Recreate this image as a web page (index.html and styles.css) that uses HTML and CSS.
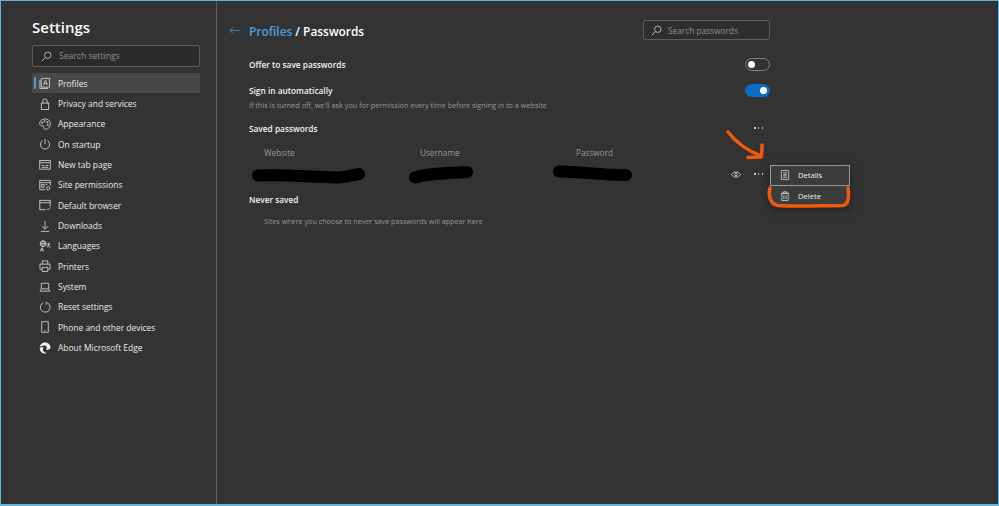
FILE: index.html
```html
<!DOCTYPE html>
<html lang="en">
<head>
<meta charset="utf-8">
<title>Settings</title>
<link rel="stylesheet" href="styles.css">
</head>
<body>
<div class="app">
  <aside class="sidebar">
    <h1 class="app-title">Settings</h1>
    <div class="search side-search">
      <svg class="search-icon" viewBox="0 0 13 13"><circle cx="8" cy="5" r="3.8"/><path d="M5.2 7.8 1 12"/></svg>
      <span>Search settings</span>
    </div>
    <nav class="nav">
      <a class="nav-item active"><svg class="ico" viewBox="0 0 13 13"><path d="M2.5 1.5h9v9.5h-9z"/><path d="M1 3v9.5h9"/><path d="M5 8.5 7 3.5l2 5M5.7 7h2.6"/></svg>Profiles</a>
      <a class="nav-item"><svg class="ico" viewBox="0 0 13 13"><rect x="2.5" y="5.5" width="8" height="7"/><path d="M4.2 5.5V3.2a2.3 2.3 0 0 1 4.6 0v2.3"/></svg>Privacy and services</a>
      <a class="nav-item"><svg class="ico" viewBox="0 0 13 13"><path d="M6.5 1C3 1 .8 3.3.8 6c0 2 1.500 2.600 3 2.500 1.500 0 1.700.8 1.500 1.700-.2 1.300.4 2 1.700 2 3 0 5.300-2.500 5.300-5.700C12.300 3.200 10 1 6.500 1z"/><circle cx="3.500" cy="5.200" r=".7"/><circle cx="6" cy="3.500" r=".7"/><circle cx="9" cy="4.500" r=".7"/><circle cx="9.500" cy="7.500" r=".7"/></svg>Appearance</a>
      <a class="nav-item"><svg class="ico" viewBox="0 0 13 13"><path d="M6.500 1v5.500"/><path d="M3.800 2.800a5 5 0 1 0 5.400 0"/></svg>On startup</a>
      <a class="nav-item"><svg class="ico" viewBox="0 0 13 13"><rect x=".8" y="1.500" width="11.400" height="9.500"/><path d="M.8 4h11.400M3 7h2.500M7 7h3M3 9h7"/></svg>New tab page</a>
      <a class="nav-item"><svg class="ico" viewBox="0 0 13 13"><path d="M7 11.500H.8v-10h11.400V7M.8 4h11.400"/><path d="M2.500 6h3v3h-3zM7 6h2"/><circle cx="10" cy="10" r="1.800"/></svg>Site permissions</a>
      <a class="nav-item"><svg class="ico" viewBox="0 0 13 13"><path d="M7 11.500H.8v-10h11.400V8M.8 4h11.400"/><path d="m8.500 10.500 1.200 1.200 2.500-2.500"/></svg>Default browser</a>
      <a class="nav-item"><svg class="ico" viewBox="0 0 13 13"><path d="M6.500 1v8.500M3 6.500l3.500 3.500L10 6.500M2 12.300h9"/></svg>Downloads</a>
      <a class="nav-item"><svg class="ico" viewBox="0 0 13 13"><circle cx="4.500" cy="4" r="3.200"/><path d="M1.300 4h6.400M4.500.8c-2 2-2 4.400 0 6.400M4.500.8c2 2 2 4.400 0 6.400M8.500 4.500h4M10.500 3v1.500c0 1.500-.8 3-2 3.500M9.500 5.500c.5 1.200 1.500 2 3 2.500M1.500 12.300l1.700-4 1.700 4M2 11h2.400"/></svg>Languages</a>
      <a class="nav-item"><svg class="ico" viewBox="0 0 13 13"><path d="M3.500 4.500v-3.500h6v3.500M3 10H1V4.500h11V10h-2"/><path d="M3.500 8h6v4.500h-6z"/></svg>Printers</a>
      <a class="nav-item"><svg class="ico" viewBox="0 0 13 13"><path d="M2.500 8.500v-6h8v6M1 11l1.500-2.500h8L12 11z"/></svg>System</a>
      <a class="nav-item"><svg class="ico" viewBox="0 0 13 13"><path d="M4.500 2a5.300 5.300 0 1 0 4.500 0M7 1 8.700 2.300 7.500 4"/></svg>Reset settings</a>
      <a class="nav-item"><svg class="ico" viewBox="0 0 13 13"><rect x="3" y=".8" width="7" height="11.400"/><path d="M5.800 10.500h1.400"/></svg>Phone and other devices</a>
      <a class="nav-item"><svg class="ico edge" viewBox="0 0 13 13"><path class="edge-a" d="M.8 6C1 2.800 3.500.6 6.600.6c3.300 0 5.900 2.400 5.900 5.200 0 1.800-1.400 2.700-2.800 2.700-1 0-2-.4-2-1 1.300-.8 1-3.700-1.900-3.700C3.200 3.800 1.600 4.600.8 6z"/><path class="edge-a" d="M.7 7c.3 3 2.500 5.400 5.300 5.400 1 0 1.800-.2 2.500-.6-2.200.3-4.300-1.500-4.300-3.600 0-1 .4-1.900 1-2.500C3.400 5.400 1.400 5.600.7 7z"/></svg>About Microsoft Edge</a>
    </nav>
  </aside>

  <main class="main">
    <header class="page-head">
      <svg class="back" viewBox="0 0 11 9"><path d="M10.500 4.500H1M4.500 1 1 4.500 4.500 8"/></svg>
      <h2 class="crumbs"><span class="crumb-link">Profiles</span> / Passwords</h2>
      <div class="search main-search">
        <svg class="search-icon" viewBox="0 0 13 13"><circle cx="8" cy="5" r="3.800"/><path d="M5.200 7.800 1 12"/></svg>
        <span>Search passwords</span>
      </div>
    </header>

    <section class="content">
      <div class="row row-offer">
        <span class="label">Offer to save passwords</span>
        <span class="toggle"><i class="knob"></i></span>
      </div>
      <div class="row row-sign">
        <span class="label">Sign in automatically</span>
        <span class="toggle on"><i class="knob"></i></span>
      </div>
      <p class="hint">If this is turned off, we'll ask you for permission every time before signing in to a website</p>
      <div class="row row-saved">
        <span class="label">Saved passwords</span>
        <span class="dots"><i></i><i></i><i></i></span>
      </div>
      <div class="table-head">
        <span class="col-site">Website</span>
        <span class="col-user">Username</span>
        <span class="col-pass">Password</span>
      </div>
      <div class="table-row">
        <svg class="eye" viewBox="0 0 12 8"><path d="M.6 4C2 1.800 3.800.8 6 .8s4 1 5.400 3.200C10 6.200 8.200 7.200 6 7.200S2 6.200.6 4z"/><circle cx="6" cy="4" r="1.600"/></svg>
        <span class="dots"><i></i><i></i><i></i></span>
      </div>
      <div class="row row-never"><span class="label">Never saved</span></div>
      <p class="empty">Sites where you choose to never save passwords will appear here</p>
    </section>
  </main>

  <div class="menu">
    <div class="menu-item focus">
      <svg class="menu-ico" viewBox="0 0 11 12"><path d="M1.500 1h8v10h-8zM3.500 3.500h4M3.500 5.200h4M3.500 6.900h4M3.500 8.600h4"/></svg>Details
    </div>
    <div class="menu-item">
      <svg class="menu-ico" viewBox="0 0 11 12"><path d="M2 3h7v8H2zM1 3h9M4 3V1.300h3V3M4.300 5v4.500M6.700 5v4.500"/></svg>Delete
    </div>
  </div>

  <svg class="scribbles" viewBox="0 0 999 506">
    <g class="ink">
      <path d="M258 175.500C285 174 310 177 335 177.500 345 177.500 352 175 359 174"/>
      <path d="M415 177.500C428 173.500 445 173 467 172"/>
      <path d="M559 171.500C580 171.500 600 175 626 175"/>
    </g>
    <g class="marker">
      <path d="M728 132C735 141 746 150 761 156"/>
      <path d="M748 157.500C752 157 757 157 761 157 762 153 762 149 762 145"/>
      <path d="M770 188C768 195 770 204 778 205.500 800 207 822 205.500 843 205.500 849 204 849 195 848 188"/>
    </g>
  </svg>
</div>
</body>
</html>
```

FILE: styles.css
```css
* { box-sizing: border-box; }
html, body { margin: 0; padding: 0; height: 100%; }
body {
  background: #333;
  color: #fff;
  font-family: "Open Sans", "Liberation Sans", sans-serif;
  overflow: hidden;
}
.app {
  position: relative;
  width: 999px;
  height: 506px;
  display: flex;
  background: #333;
  border: 1px solid #5fb6dc;
  border-bottom-width: 2px;
}
.sidebar {
  width: 216px;
  flex: none;
  height: 100%;
  border-right: 1px solid #5f5f5f;
  padding: 16px 16px 0 31px;
}
.app-title {
  margin: 0;
  font-size: 15px;
  line-height: 20px;
  font-weight: 600;
  color: #fff;
}
.search {
  display: flex;
  align-items: center;
  background: #2b2b2b;
  border: 1px solid #5c5c5c;
  border-radius: 2px;
  color: #8f8f8f;
  font-size: 8.600px;
}
.search-icon { width: 11px; height: 11px; fill: none; stroke: #c8c8c8; stroke-width: 1; flex: none; }
.side-search { height: 22px; margin-top: 8px; padding-left: 8px; gap: 7px; }
.nav { margin-top: 6px; display: flex; flex-direction: column; }
.nav-item {
  position: relative;
  height: 20.350px;
  display: flex;
  align-items: center;
  padding-left: 7px;
  gap: 7px;
  font-size: 8.450px;
  color: #eaeaea;
}
.nav-item.active { background: #484848; border-radius: 1px; }
.nav-item.active::before {
  content: "";
  position: absolute;
  left: 2px;
  top: 4px;
  width: 2px;
  height: 12px;
  background: #4a9fe0;
  border-radius: 1px;
}
.ico { width: 12px; height: 12px; flex: none; fill: none; stroke: #d8d8d8; stroke-width: .9; }
.edge .edge-a { fill: #f0f0f0; stroke: none; }

.main { flex: 1; height: 100%; padding: 19px 0 0 12px; min-width: 0; }
.page-head { display: flex; align-items: center; height: 20px; width: 541px; }
.back { width: 11px; height: 9px; fill: none; stroke: #3f7fb8; stroke-width: 1; flex: none; }
.crumbs { margin: 0 0 0 9px; padding-top: 2px; font-size: 11.900px; font-weight: 600; line-height: 20px; color: #fff; }
.crumb-link { color: #4a9fe0; }
.main-search { width: 127px; height: 20px; margin-left: auto; padding-left: 7px; gap: 6px; font-size: 8.300px; background: #2e2e2e; }

.content { width: 521px; margin-left: 20px; }
.row { display: flex; align-items: center; justify-content: space-between; }
.label { font-size: 8.300px; font-weight: 600; color: #f4f4f4; padding-top: 1px; }
.row-offer { height: 14px; margin-top: 17px; }
.row-sign { height: 14px; margin-top: 12px; }
.hint { margin: 1px 0 0; height: 14px; line-height: 14px; font-size: 7.280px; color: #989898; white-space: nowrap; }
.row-saved { height: 14px; margin-top: 9px; padding-right: 7px; }
.toggle {
  position: relative;
  width: 25px;
  height: 13px;
  border: 1px solid #808080;
  border-radius: 7px;
  background: #333;
  display: flex;
  align-items: center;
  padding: 0 2px;
}
.toggle.on { background: #0a6cc4; border-color: #0a6cc4; justify-content: flex-end; }
.knob { width: 7px; height: 7px; border-radius: 50%; background: #fff; }
.dots { display: inline-flex; gap: 2.250px; }
.dots i { width: 1.500px; height: 1.500px; background: #c4c4c4; display: block; }
.table-head { display: flex; height: 14px; margin-top: 11px; font-size: 8.200px; color: #989898; line-height: 14px; }
.col-site { margin-left: 15px; width: 156px; }
.col-user { width: 156px; }
.table-row { display: flex; align-items: center; justify-content: flex-end; height: 28px; padding-right: 7px; gap: 13px; }
.eye { width: 10px; height: 7px; fill: none; stroke: #d8d8d8; stroke-width: 1; }
.row-never { height: 14px; margin-top: 4px; }
.empty { margin: 8px 0 0 15px; font-size: 7.200px; line-height: 14px; color: #989898; }

.menu {
  position: absolute;
  left: 769px;
  top: 164px;
  width: 80px;
  background: #3c3c3c;
  box-shadow: 0 2px 8px rgba(0,0,0,.45);
  font-size: 7.600px;
  color: #f0f0f0;
}
.menu-item { height: 20.500px; display: flex; align-items: center; padding-left: 9px; gap: 8px; border: 1px solid transparent; }
.menu-item.focus { border: 1px solid #999; }
.menu-ico { width: 10px; height: 12px; fill: none; stroke: #d0d0d0; stroke-width: .9; flex: none; }

.scribbles { position: absolute; left: -1px; top: -1px; width: 999px; height: 506px; pointer-events: none; }
.ink path { fill: none; stroke: #000; stroke-width: 12; stroke-linecap: round; stroke-linejoin: round; }
.marker path { fill: none; stroke: #f25a0a; stroke-width: 3.500; stroke-linecap: round; stroke-linejoin: round; }
```
